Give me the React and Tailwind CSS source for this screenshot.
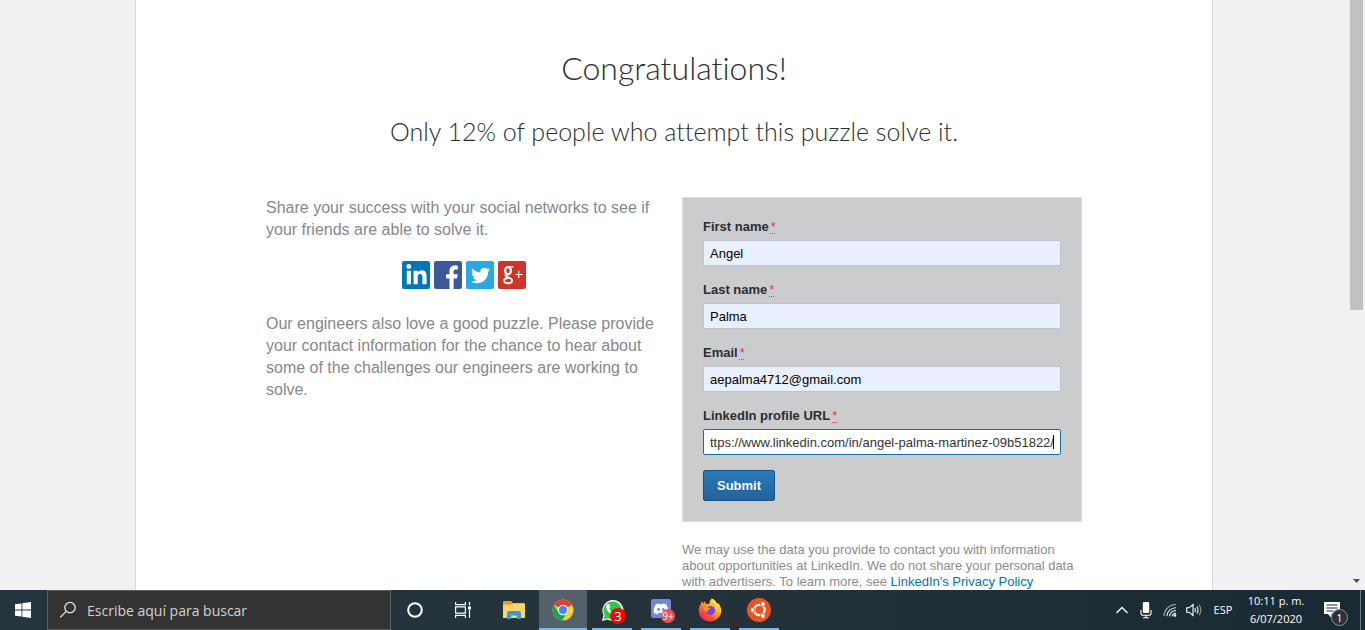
import React from "react";
import { FaLinkedinIn, FaTwitter, FaDiscord, FaWhatsapp } from "react-icons/fa";

const fields = [
  { id: "first-name", label: "First name", value: "Angel" },
  { id: "last-name", label: "Last name", value: "Palma" },
  { id: "email", label: "Email", value: "aepalma4712@gmail.com" },
];

function FieldLabel({ htmlFor, children }) {
  return (
    <label htmlFor={htmlFor} className="mb-1 block text-[13px] leading-[18px] font-bold text-[#2b2e31]">
      {children}
      <abbr
        title="required"
        className="ml-0.5 font-normal text-[#dd3a4a] underline decoration-dotted decoration-1 underline-offset-2"
      >
        *
      </abbr>
    </label>
  );
}

function ShareLinks() {
  const base = "flex size-7 items-center justify-center rounded-xs text-white";
  return (
    <div className="my-5 flex justify-center gap-1">
      <a href="#linkedin" aria-label="LinkedIn" className={base + " bg-[#0077b5]"}>
        <FaLinkedinIn size={23} />
      </a>
      <a href="#facebook" aria-label="Facebook" className={base + " bg-[#3b5998]"}>
        <svg viewBox="0 0 28 28" className="size-7" fill="#fff">
          <path d="M15.500 28V17.500H12v-4.300h3.500V10c0-3.600 2.200-5.500 5.300-5.500 1.500 0 2.300.1 3 .2v3.800h-2c-1.700 0-2.200.8-2.200 2v2.700h4.100l-.6 4.300h-3.500V28z" />
        </svg>
      </a>
      <a href="#twitter" aria-label="Twitter" className={base + " bg-[#28a9e1]"}>
        <FaTwitter size={19} />
      </a>
      <a href="#google-plus" aria-label="Google Plus" className={base + " bg-[#d1332a]"}>
        <svg viewBox="0 0 28 28" className="size-7" fill="none" stroke="#fff">
          <ellipse cx="10" cy="9.800" rx="2.900" ry="3.600" strokeWidth="2.300" />
          <path d="M10.500 5.800h5" strokeWidth="1.200" />
          <path d="M8.200 13.200c-1.400 1.700-.2 2.300 1.600 3 2 .8 4.300 1.300 4.300 3.300 0 1.900-2 2.700-4.100 2.700-2.300 0-3.900-.8-3.900-2.600 0-1.800 1.800-2.600 4-2.600" strokeWidth="1.900" />
          <path d="M17 13.500h7.500M20.700 9.800v7.500" strokeWidth="1.200" />
        </svg>
      </a>
    </div>
  );
}

function WindowsIcon() {
  return (
    <svg viewBox="0 0 16 16" className="size-4" fill="#fff">
      <path d="M0 2.300 6.500 1.400V7.600H0zM7.300 1.300 16 0v7.600H7.300zM0 8.400h6.500v6.200L0 13.700zM7.300 8.400H16V16l-8.700-1.300z" />
    </svg>
  );
}

function SearchIcon() {
  return (
    <svg viewBox="0 0 18 18" className="size-[18px]" fill="none" stroke="#e4e4e4" strokeWidth="1.300">
      <circle cx="11" cy="6.600" r="5.200" />
      <path d="M7.200 10.400 1.200 16.400" />
    </svg>
  );
}

function TaskViewIcon() {
  return (
    <svg viewBox="0 0 18 18" className="size-[18px]" fill="none" stroke="#fff" strokeWidth="1.200">
      <path d="M1.600 1v2.600h9.800V1M1.600 17v-2.600h9.800V17M1.600 5.800h9.800v6.400H1.600zM15.500 1v3.500M15.500 9v8" />
      <path d="M14 5.500h3v3h-3z" fill="#fff" stroke="none" />
    </svg>
  );
}

function ExplorerIcon() {
  return (
    <svg viewBox="0 0 22 18" className="h-[18px] w-[22px]">
      <path d="M0 1q0-1 1-1h7l2 2h11q1 0 1 1v14H0z" fill="#e3a21b" />
      <path d="M0 3.500h9l1.500-1H21q1 0 1 1V17H0z" fill="#fbd667" />
      <path d="M4 18v-6q0-2 2-2h10q2 0 2 2v6h-4v-3.500H8V18z" fill="#3d98d8" />
    </svg>
  );
}

function ChromeIcon() {
  return (
    <svg viewBox="0 0 24 24" className="size-[22px]">
      <circle cx="12" cy="12" r="11.500" fill="#fbcf3b" />
      <path d="M12 12 2.040 6.250A11.500 11.500 0 0 1 21.960 6.250z" fill="#dc4437" />
      <path d="M12 6.500h10.100l-.5-1-9.600-.5z" fill="#dc4437" />
      <path d="M2.040 6.250A11.500 11.500 0 0 0 11 23.460L16.600 14.800 12 12 7.300 14.800z" fill="#1fa15d" />
      <circle cx="12" cy="12" r="5.700" fill="#f3f5f8" />
      <circle cx="12" cy="12" r="4.400" fill="#4285f4" />
    </svg>
  );
}

function FirefoxIcon() {
  return (
    <svg viewBox="0 0 24 24" className="size-6">
      <defs>
        <linearGradient id="fx" x1="0.85" y1="0.100" x2="0.200" y2="0.950">
          <stop offset="0" stopColor="#fff04a" />
          <stop offset="0.400" stopColor="#ffa528" />
          <stop offset="0.700" stopColor="#ff5534" />
          <stop offset="1" stopColor="#e8206c" />
        </linearGradient>
      </defs>
      <path d="M13.800.5c3.300 1.700 4.400 3.900 5 5.600.700-.400.900-1.100.9-1.700 2.300 2.500 3.600 5.100 3.600 8.200C23.300 19 18.300 23.500 12 23.500S.7 18.800.7 12.500c0-3 1.200-5.200 2.200-6.600L3.400 3.200 5.300 5.600 6.800 3.200l.9 2.600c1.200-.2 2.500 0 3.400.5.500-2.500 1.200-4.300 2.700-5.800z" fill="url(#fx)" />
      <circle cx="12.500" cy="12.500" r="4.600" fill="#7947d8" />
      <path d="M5 8.200c2.400-.4 4 .3 5 1.500l2.500.2c-.5 1.100-1.700 1.500-2.200 2.100-.3 1.300-1.300 2-2.700 1.600C6 12.200 5 10.500 5 8.200z" fill="#ff9a2a" />
      <path d="M13.800.5c-.5 4.500 4.800 6 4.500 12 2-2.600 1.500-5.800.5-7.300C17.900 3.200 16 1.500 13.800.5z" fill="#ffdc3a" />
    </svg>
  );
}

function UbuntuIcon() {
  return (
    <svg viewBox="0 0 24 24" className="size-6">
      <circle cx="12" cy="12" r="12" fill="#e95420" />
      <circle cx="12.400" cy="12" r="5.200" fill="none" stroke="#fff" strokeWidth="2.300" />
      <g stroke="#e95420" strokeWidth="1" fill="#fff">
        <circle cx="5.500" cy="12" r="2.400" />
        <circle cx="15.900" cy="6" r="2.400" />
        <circle cx="15.900" cy="18" r="2.400" />
      </g>
    </svg>
  );
}

function TaskButton({ label, active, running, children }) {
  return (
    <button
      aria-label={label}
      className={
        active
          ? "relative flex h-10 w-12 items-center justify-center bg-[#53626a]"
          : "relative flex h-10 w-12 items-center justify-center"
      }
    >
      {children}
      {running && (
        <span
          className={
            active
              ? "absolute inset-x-0 bottom-0 h-0.5 bg-[#76b9ed]"
              : "absolute inset-x-1 bottom-0 h-0.5 bg-[#76b9ed]"
          }
        />
      )}
    </button>
  );
}

function Taskbar() {
  return (
    <footer className="flex h-10 shrink-0 items-stretch bg-linear-to-r from-[#24353e] via-[#253239] to-[#1a2a32] font-['Open_Sans',sans-serif] text-white">
      <button aria-label="Inicio" className="flex w-[47px] items-center pl-[15px]">
        <WindowsIcon />
      </button>
      <label className="flex w-[344px] items-center gap-2.5 border border-[#5b5e60] bg-[#333] pl-[11px]">
        <SearchIcon />
        <input
          type="search"
          aria-label="Buscar"
          placeholder="Escribe aquí para buscar"
          className="min-w-0 flex-1 bg-transparent text-[14px] outline-none placeholder:text-[#d2d2d2]"
        />
      </label>
      <TaskButton label="Cortana">
        <svg viewBox="0 0 16 16" className="size-4" fill="none" stroke="#fff" strokeWidth="2">
          <circle cx="8" cy="8" r="6.800" />
        </svg>
      </TaskButton>
      <TaskButton label="Vista de tareas">
        <TaskViewIcon />
      </TaskButton>
      <div className="ml-[3px] flex gap-px">
        <TaskButton label="Explorador de archivos">
          <ExplorerIcon />
        </TaskButton>
        <TaskButton label="Chrome" active running>
          <ChromeIcon />
        </TaskButton>
        <TaskButton label="WhatsApp" running>
          <svg viewBox="0 0 24 24" className="size-[23px]">
            <path d="M1 23 2.700 17A11 11 0 1 1 7 21.500z" fill="#fff" />
            <path d="M2.700 21.300 4 17A9.500 9.500 0 1 1 7.300 20.200z" fill="#2fc64f" />
            <svg x="5" y="4.500" width="14" height="14" viewBox="106 140 236 236">
              <FaWhatsapp size={448} viewBox="0 32 448 448" y="32" color="#fff" />
            </svg>
          </svg>
          <span className="absolute top-[18px] left-[22px] flex size-4 items-center justify-center rounded-full bg-[#ee0909] text-[13px] leading-4">
            3
          </span>
        </TaskButton>
        <TaskButton label="Discord" running>
          <svg viewBox="0 0 20 22" className="h-[22px] w-5">
            <path d="M2 0h16q2 0 2 2v20l-3.500-3H2q-2 0-2-2V2q0-2 2-2z" fill="#7187d4" />
            <FaDiscord x="2" y="2" size={16} color="#fff" />
          </svg>
          <span className="absolute top-[19px] left-[24px] flex size-3.5 items-center justify-center rounded-full bg-[#ee4f50] text-[10px] leading-none">
            9+
          </span>
        </TaskButton>
        <TaskButton label="Firefox" running>
          <FirefoxIcon />
        </TaskButton>
        <TaskButton label="Ubuntu" running>
          <UbuntuIcon />
        </TaskButton>
      </div>
      <div className="ml-auto flex items-stretch">
        <button aria-label="Iconos ocultos" className="flex w-6 items-center justify-center">
          <svg viewBox="0 0 14 14" className="size-3.5" fill="none" stroke="#fff" strokeWidth="1.300">
            <path d="M1.500 10 7 4.500 12.500 10" />
          </svg>
        </button>
        <button aria-label="Micrófono" className="flex w-6 items-center justify-center">
          <svg viewBox="0 0 12 18" className="h-[18px] w-3">
            <rect x="2.800" y="1" width="6.400" height="11" rx="1.200" fill="#fff" />
            <path d="M1 9v3.500q0 1.700 1.700 1.700h6.600q1.700 0 1.700-1.700V9M6 14v2.500M3 16.700h6" fill="none" stroke="#fff" strokeWidth="1.100" />
          </svg>
        </button>
        <button aria-label="Red" className="flex w-6 items-center justify-center">
          <svg viewBox="0 0 14 14" className="size-3.5" fill="none" stroke="#e8ecee" strokeWidth="1.100">
            <path d="M1 13A12 12 0 0 1 13 1.500" opacity="0.700" />
            <path d="M3.800 13.200A9 9 0 0 1 13 4.700M6.500 13.300A6 6 0 0 1 13 7.700M9 13.300a4 4 0 0 1 4-3" />
            <circle cx="12" cy="12.500" r="1.300" fill="#fff" stroke="none" />
          </svg>
        </button>
        <button aria-label="Volumen" className="flex w-6 items-center justify-center">
          <svg viewBox="0 0 16 14" className="h-3.5 w-4" fill="none" stroke="#fff" strokeWidth="1.100">
            <path d="M.7 4.800h2.500L7 1.500v11L3.200 9.200H.7zM8.800 5q1.400 2 0 4M10.800 3.500q2.500 3.500 0 7" />
            <path d="M13 1.800q3.800 5.200 0 10.400" stroke="#8b979d" />
          </svg>
        </button>
        <button className="w-[34px] text-[11px]">ESP</button>
        <button className="w-[72px] text-[11px] leading-[18px]">
          <span className="block">10:11 p. m.</span>
          <span className="block">6/07/2020</span>
        </button>
        <button aria-label="Notificaciones" className="relative flex w-12 items-center pl-3">
          <svg viewBox="0 0 16 16" className="size-4">
            <path d="M0 0h16v12H7.500v4L4 12H0z" fill="#fff" />
            <path d="M2.500 3h11M2.500 6h11M2.500 9h7" stroke="#1b2a32" strokeWidth="1.100" />
          </svg>
          <span className="absolute top-[19px] left-[19px] flex size-[17px] items-center justify-center rounded-full border border-[#8c8f91] bg-[#2d3236] text-[11px] leading-none">
            1
          </span>
        </button>
        <span className="w-[5px] border-l border-[#6f7b81]" />
      </div>
    </footer>
  );
}

export default function App() {
  return (
    <div className="flex h-screen flex-col overflow-hidden font-['Liberation_Sans',Arial,sans-serif]">
      <div className="flex min-h-0 flex-1 bg-[#f1f1f1]">
        <div className="min-w-0 flex-1 overflow-hidden">
          <main className="mx-auto min-h-full max-w-[1078px] border-x border-[#d8d8d8] bg-white pt-12">
            <header className="text-center font-['Lato',sans-serif] font-light text-[#2b2e31] [font-variant-ligatures:none]">
              <h1 className="text-[32px] leading-10">Congratulations!</h1>
              <h2 className="mt-[23px] text-[25px] leading-10">
                Only 12% of people who attempt this puzzle solve it.
              </h2>
            </header>
            <div className="mx-auto mt-[46px] flex max-w-[816px] items-start gap-5">
              <section className="min-w-0 flex-1 text-[16px] leading-[22px] text-[#86888a]">
                <p>Share your success with your social networks to see if your friends are able to solve it.</p>
                <ShareLinks />
                <p className="mt-6">
                  Our engineers also love a good puzzle. Please provide your contact information for the chance to hear
                  about some of the challenges our engineers are working to solve.
                </p>
              </section>
              <section className="w-[400px] shrink-0">
                <form
                  onSubmit={(e) => e.preventDefault()}
                  className="flex flex-col gap-[15px] border border-[#dcdddd] bg-[#caccce] p-5"
                >
                  {fields.map((f) => (
                    <div key={f.id}>
                      <FieldLabel htmlFor={f.id}>{f.label}</FieldLabel>
                      <input
                        id={f.id}
                        type="text"
                        defaultValue={f.value}
                        className="block h-[26px] w-full border border-[#c0c4cc] bg-[#e8f0fe] px-1.5 text-[13px] text-black outline-none"
                      />
                    </div>
                  ))}
                  <div>
                    <FieldLabel htmlFor="profile-url">LinkedIn profile URL</FieldLabel>
                    <div className="relative">
                      <input
                        id="profile-url"
                        type="text"
                        defaultValue="ttps://www.linkedin.com/in/angel-palma-martinez-09b51822/"
                        className="block h-[26px] w-full rounded-xs border border-[#0f6fab] bg-white px-1.5 text-[13px] text-[#333] outline-none"
                      />
                      <span className="absolute top-1.5 right-[7px] h-3.5 w-px bg-black" />
                    </div>
                  </div>
                  <button
                    type="submit"
                    className="h-[31px] w-[72px] rounded-xs border border-[#1b5480] bg-linear-to-b from-[#287bbc] to-[#23639a] text-[13px] font-bold text-white text-shadow-2xs"
                  >
                    Submit
                  </button>
                </form>
                <p className="mt-5 text-[13px] leading-4 text-[#8c8c8c]">
                  We may use the data you provide to contact you with information about opportunities at LinkedIn. We do
                  not share your personal data with advertisers. To learn more, see{" "}
                  <a href="#privacy" className="text-[#0073b1]">
                    LinkedIn's Privacy Policy
                  </a>
                </p>
              </section>
            </div>
          </main>
        </div>
        <div className="flex w-[17px] shrink-0 flex-col items-center justify-between">
          <span className="h-[310px] w-[13px] bg-[#c1c1c1]" />
          <svg viewBox="0 0 7 4" className="mb-[7px] h-1 w-[7px]" fill="#505050">
            <path d="M0 0h7L3.500 4z" />
          </svg>
        </div>
      </div>
      <Taskbar />
    </div>
  );
}
